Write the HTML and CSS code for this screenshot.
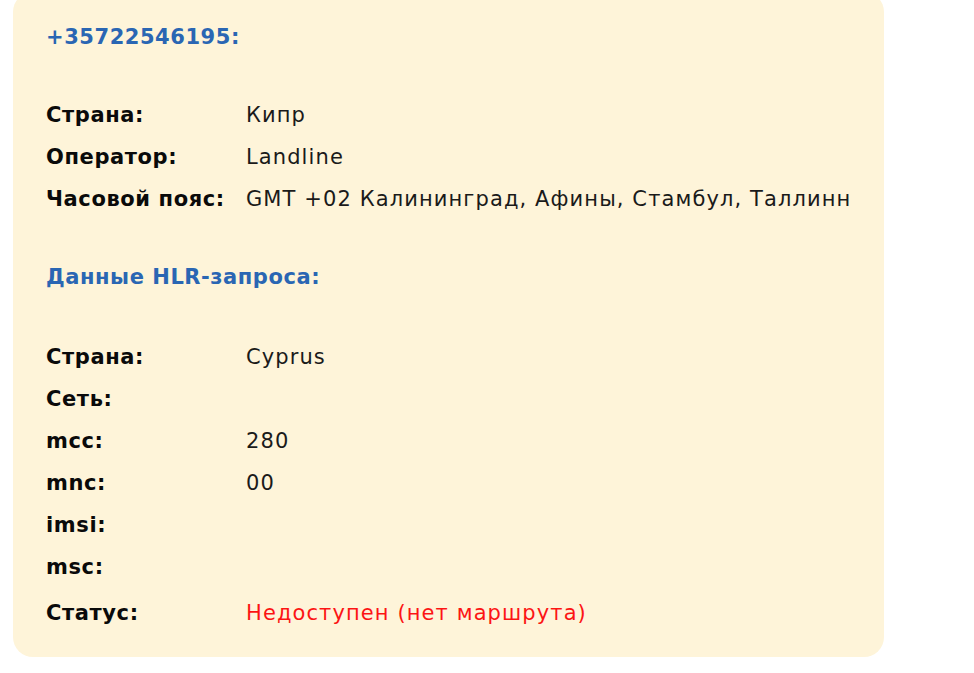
FILE: index.html
```html
<!DOCTYPE html>
<html lang="ru">
<head>
<meta charset="utf-8">
<title>HLR</title>
<link rel="stylesheet" href="styles.css">
</head>
<body>
<section class="card">
  <h2 class="title">+35722546195:</h2>
  <dl class="info">
    <dt>Страна:</dt><dd>Кипр</dd>
    <dt>Оператор:</dt><dd>Landline</dd>
    <dt>Часовой пояс:</dt><dd>GMT +02 Калининград, Афины, Стамбул, Таллинн</dd>
  </dl>
  <h2 class="title title-hlr">Данные HLR-запроса:</h2>
  <dl class="info info-hlr">
    <dt>Страна:</dt><dd>Cyprus</dd>
    <dt>Сеть:</dt><dd></dd>
    <dt>mcc:</dt><dd>280</dd>
    <dt>mnc:</dt><dd>00</dd>
    <dt>imsi:</dt><dd></dd>
    <dt>msc:</dt><dd></dd>
    <dt class="status-label">Статус:</dt><dd class="status-value">Недоступен (нет маршрута)</dd>
  </dl>
</section>
</body>
</html>
```
FILE: styles.css
```css
html, body {
  margin: 0;
  padding: 0;
  background: #ffffff;
}
body {
  font-family: "DejaVu Sans", "Liberation Sans", sans-serif;
  color: #111111;
}
.card {
  box-sizing: border-box;
  width: 871px;
  margin: -8px 0 0 13px;
  padding: 24px 20px 23px 33px;
  background: #fef4d9;
  border-radius: 20px;
}
.title {
  margin: 0;
  font-size: 21px;
  line-height: 42px;
  font-weight: 700;
  letter-spacing: 0.55px;
  color: #2a66b3;
}
.title-hlr {
  margin-top: 36px;
}
.info {
  display: grid;
  grid-template-columns: 200px 1fr;
  margin: 36px 0 0;
  font-size: 21px;
  line-height: 42px;
}
.info-hlr {
  margin-top: 38px;
}
.info dt {
  font-weight: 700;
  letter-spacing: 0.6px;
  color: #0a0a0a;
}
.info dd {
  margin: 0;
  letter-spacing: 1.1px;
  white-space: nowrap;
  color: #1a1a1a;
  min-height: 42px;
}
.info .status-label,
.info .status-value {
  margin-top: 4px;
}
.info .status-value {
  color: #fc1414;
}
```
